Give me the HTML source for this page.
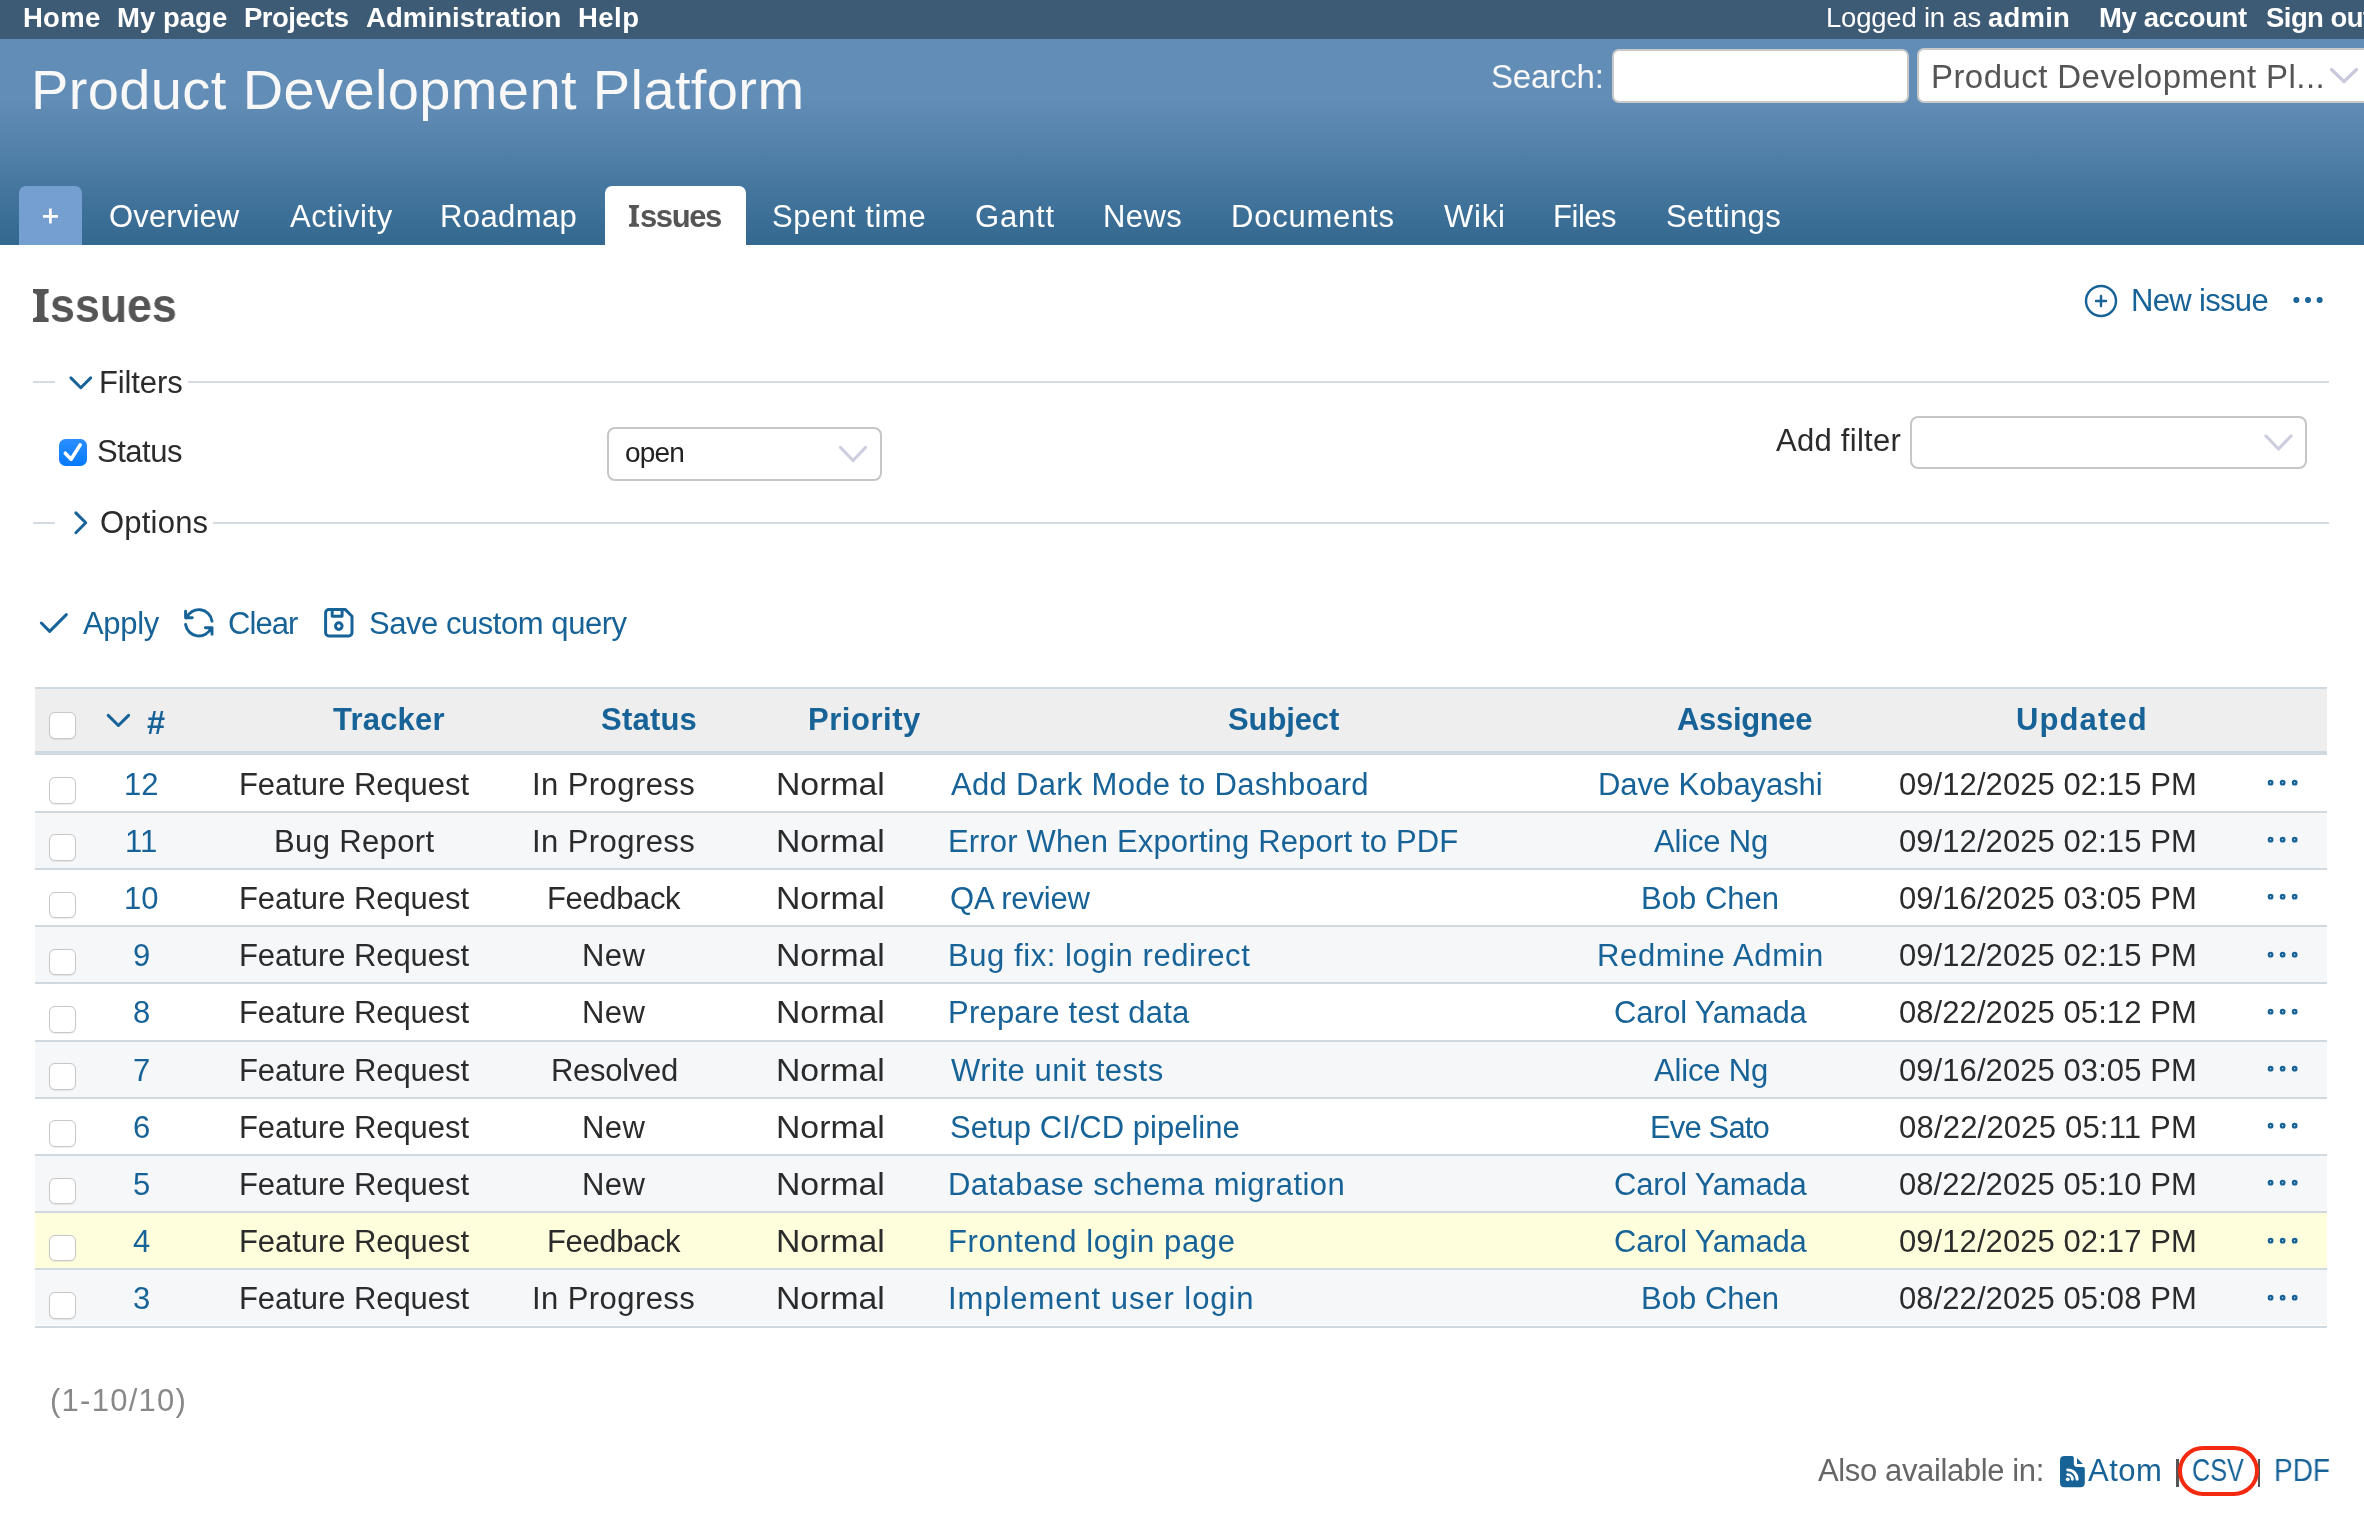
<!DOCTYPE html>
<html><head><meta charset="utf-8"><title>Issues - Product Development Platform</title>
<style>
html,body{margin:0;padding:0;overflow:hidden;}
body{width:2364px;height:1524px;overflow:hidden;position:relative;background:#fff;font-family:"Liberation Sans",sans-serif;}
.t{position:absolute;white-space:nowrap;will-change:transform;}
svg{overflow:visible;}
</style></head><body>
<div style="position:absolute;left:0px;top:0px;width:2364px;height:39px;background:#3e5b76;"></div>
<div class="t" style="left:22.74px;top:4.23px;font-size:27.5px;line-height:27.5px;color:#fff;font-weight:bold;letter-spacing:0.256px;">Home</div>
<div class="t" style="left:116.74px;top:4.23px;font-size:27.5px;line-height:27.5px;color:#fff;font-weight:bold;letter-spacing:0.025px;">My page</div>
<div class="t" style="left:244.14px;top:4.23px;font-size:27.5px;line-height:27.5px;color:#fff;font-weight:bold;letter-spacing:-0.504px;">Projects</div>
<div class="t" style="left:366.31px;top:4.23px;font-size:27.5px;line-height:27.5px;color:#fff;font-weight:bold;letter-spacing:0.102px;">Administration</div>
<div class="t" style="left:578.14px;top:4.23px;font-size:27.5px;line-height:27.5px;color:#fff;font-weight:bold;letter-spacing:0.473px;">Help</div>
<div class="t" style="left:1825.73px;top:4.23px;font-size:27.5px;line-height:27.5px;color:#fff;letter-spacing:-0.207px;">Logged in as</div>
<div class="t" style="left:1987.67px;top:4.23px;font-size:27.5px;line-height:27.5px;color:#fff;font-weight:bold;letter-spacing:0.197px;">admin</div>
<div class="t" style="left:2099.14px;top:4.23px;font-size:27.5px;line-height:27.5px;color:#fff;font-weight:bold;letter-spacing:-0.339px;">My account</div>
<div class="t" style="left:2265.78px;top:4.23px;font-size:27.5px;line-height:27.5px;color:#fff;font-weight:bold;letter-spacing:-0.552px;">Sign out</div>
<div style="position:absolute;left:0px;top:39px;width:2364px;height:206px;background:linear-gradient(180deg,#628db6 0px,#628db6 60px,#33688f 206px);"></div>
<div class="t" style="left:30.58px;top:61.60px;font-size:56px;line-height:56px;color:#f8f8f8;letter-spacing:0.388px;">Product Development Platform</div>
<div class="t" style="left:1491.12px;top:60.25px;font-size:33px;line-height:33px;color:#f8f8f8;letter-spacing:-0.138px;">Search:</div>
<div style="position:absolute;left:1611.6px;top:48.5px;width:297.4000000000001px;height:54.900000000000006px;background:#fff;border:2px solid #c9c9c9;border-radius:7px;box-sizing:border-box;"></div>
<div style="position:absolute;left:1917px;top:48px;width:483px;height:55px;background:#fff;border:2px solid #c9c9c9;border-radius:7px;box-sizing:border-box;"></div>
<div class="t" style="left:1931.28px;top:59.95px;font-size:33px;line-height:33px;color:#555;letter-spacing:0.430px;">Product Development Pl...</div>
<svg style="position:absolute;left:2328px;top:62px;" width="32" height="26" viewBox="0 0 32 26" preserveAspectRatio="none" fill="none"><path d="M3.5 7.5 L16 19.5 L28.5 7.5" stroke="#c9c9dd" stroke-width="3.2" stroke-linecap="round" stroke-linejoin="round"/></svg>
<div style="position:absolute;left:19px;top:186px;width:63px;height:59px;background:#759fcf;border-radius:7px 7px 0 0;"></div>
<svg style="position:absolute;left:40px;top:206px;" width="21" height="21" viewBox="0 0 21 21" preserveAspectRatio="none" fill="none"><path d="M10.4 2.5 V17.6 M3 10.3 H18" stroke="#fff" stroke-width="2.7"/></svg>
<div style="position:absolute;left:605px;top:186px;width:140.70000000000005px;height:59px;background:#fff;border-radius:7px 7px 0 0;"></div>
<div class="t" style="left:109.03px;top:200.95px;font-size:31px;line-height:31px;color:#fff;letter-spacing:0.143px;">Overview</div>
<div class="t" style="left:289.92px;top:200.95px;font-size:31px;line-height:31px;color:#fff;letter-spacing:0.566px;">Activity</div>
<div class="t" style="left:440.44px;top:200.95px;font-size:31px;line-height:31px;color:#fff;letter-spacing:0.402px;">Roadmap</div>
<div class="t" style="left:771.61px;top:200.95px;font-size:31px;line-height:31px;color:#fff;letter-spacing:0.615px;">Spent time</div>
<div class="t" style="left:975.25px;top:200.95px;font-size:31px;line-height:31px;color:#fff;letter-spacing:0.797px;">Gantt</div>
<div class="t" style="left:1103.04px;top:200.95px;font-size:31px;line-height:31px;color:#fff;letter-spacing:0.448px;">News</div>
<div class="t" style="left:1231.14px;top:200.95px;font-size:31px;line-height:31px;color:#fff;letter-spacing:0.770px;">Documents</div>
<div class="t" style="left:1444.25px;top:200.95px;font-size:31px;line-height:31px;color:#fff;letter-spacing:0.745px;">Wiki</div>
<div class="t" style="left:1553.14px;top:200.95px;font-size:31px;line-height:31px;color:#fff;letter-spacing:-0.461px;">Files</div>
<div class="t" style="left:1666.40px;top:200.95px;font-size:31px;line-height:31px;color:#fff;letter-spacing:0.385px;">Settings</div>
<svg style="position:absolute;left:628.8px;top:205.1px;" width="10.05" height="21.7" viewBox="0 0 15.6 33" preserveAspectRatio="none" fill="none"><path d="M0,0 H15.6 V3.9 C13,4.3 11.5,5.2 11.5,6.9 V26.3 C11.5,28 13,28.9 15.6,29.2 V33 H0 V29.2 C2.6,28.9 4,28 4,26.3 V6.9 C4,5.2 2.6,4.3 0,3.9 Z" fill="#555" transform="scale(1 1)"/></svg>
<div class="t" style="left:640.01px;top:200.95px;font-size:31px;line-height:31px;color:#555;font-weight:bold;letter-spacing:-1.415px;">ssues</div>
<svg style="position:absolute;left:33.1px;top:288.6px;" width="15.6" height="33" viewBox="0 0 15.6 33" preserveAspectRatio="none" fill="none"><path d="M0,0 H15.6 V3.9 C13,4.3 11.5,5.2 11.5,6.9 V26.3 C11.5,28 13,28.9 15.6,29.2 V33 H0 V29.2 C2.6,28.9 4,28 4,26.3 V6.9 C4,5.2 2.6,4.3 0,3.9 Z" fill="#555"/></svg>
<div class="t" style="left:50.28px;top:280.77px;font-size:48.5px;line-height:48.5px;color:#555;font-weight:bold;transform:scaleX(0.9222);transform-origin:0 0;">ssues</div>
<svg style="position:absolute;left:2080.7px;top:280.7px;" width="40" height="40" viewBox="0 0 24 24" preserveAspectRatio="none" fill="none"><g stroke="#176398" stroke-width="1.45" stroke-linecap="round" stroke-linejoin="round"><path d="M3 12a9 9 0 1 0 18 0a9 9 0 0 0 -18 0"/><path d="M9 12h6"/><path d="M12 9v6"/></g></svg>
<div class="t" style="left:2130.84px;top:284.75px;font-size:31px;line-height:31px;color:#176398;letter-spacing:-0.664px;">New issue</div>
<svg style="position:absolute;left:2288.2px;top:280.0px;" width="40" height="40" viewBox="0 0 24 24" preserveAspectRatio="none" fill="none"><g stroke="#176398" stroke-width="1.6" stroke-linecap="round" stroke-linejoin="round"><path d="M5 12m-1 0a1 1 0 1 0 2 0a1 1 0 1 0 -2 0"/><path d="M12 12m-1 0a1 1 0 1 0 2 0a1 1 0 1 0 -2 0"/><path d="M19 12m-1 0a1 1 0 1 0 2 0a1 1 0 1 0 -2 0"/></g></svg>
<div style="position:absolute;left:33px;top:381px;width:22px;height:2px;background:#d3dae2;"></div>
<div style="position:absolute;left:188.4px;top:381px;width:2140.6px;height:2px;background:#d3dae2;"></div>
<svg style="position:absolute;left:60.8px;top:362.9px;" width="39.6" height="39.6" viewBox="0 0 24 24" preserveAspectRatio="none" fill="none"><g stroke="#176398" stroke-width="1.8" stroke-linecap="round" stroke-linejoin="round"><path d="M6 9l6 6l6 -6"/></g></svg>
<div class="t" style="left:99.44px;top:366.55px;font-size:31px;line-height:31px;color:#2b2b2b;letter-spacing:-0.126px;">Filters</div>
<div style="position:absolute;left:58.9px;top:439.2px;width:27.699999999999996px;height:26.80000000000001px;background:linear-gradient(#2b8eff,#077aff);border-radius:6.5px;"></div>
<svg style="position:absolute;left:58.9px;top:439.2px;" width="27.7" height="26.8" viewBox="0 0 27.7 26.8" preserveAspectRatio="none" fill="none"><path d="M6.3 14.2 L12.1 20.2 L21.2 5.9" stroke="#fff" stroke-width="3.6" stroke-linecap="round" stroke-linejoin="round"/></svg>
<div class="t" style="left:96.61px;top:435.85px;font-size:31px;line-height:31px;color:#2b2b2b;letter-spacing:-0.481px;">Status</div>
<div style="position:absolute;left:607.4px;top:427.4px;width:275.0px;height:54.10000000000002px;background:#fff;border:2px solid #c6c6c6;border-radius:8px;box-sizing:border-box;"></div>
<div class="t" style="left:624.51px;top:439.30px;font-size:28px;line-height:28px;color:#222;letter-spacing:-0.863px;">open</div>
<svg style="position:absolute;left:836px;top:443px;" width="34" height="22" viewBox="0 0 34 22" preserveAspectRatio="none" fill="none"><path d="M4.5 4.5 L17 17.5 L29.5 4.5" stroke="#cdcde0" stroke-width="3.2" stroke-linecap="round" stroke-linejoin="round"/></svg>
<div class="t" style="left:1776.32px;top:424.75px;font-size:31px;line-height:31px;color:#2b2b2b;letter-spacing:0.272px;">Add filter</div>
<div style="position:absolute;left:1909.5px;top:415.7px;width:397.9000000000001px;height:53.5px;background:#fff;border:2px solid #c6c6c6;border-radius:8px;box-sizing:border-box;"></div>
<svg style="position:absolute;left:2262px;top:432px;" width="34" height="22" viewBox="0 0 34 22" preserveAspectRatio="none" fill="none"><path d="M4 4 L16.5 17 L29 4" stroke="#cdcde0" stroke-width="3.2" stroke-linecap="round" stroke-linejoin="round"/></svg>
<div style="position:absolute;left:33px;top:522px;width:22px;height:2px;background:#d3dae2;"></div>
<div style="position:absolute;left:213.2px;top:522px;width:2115.8px;height:2px;background:#d3dae2;"></div>
<svg style="position:absolute;left:61.3px;top:503.1px;" width="39.6" height="39.6" viewBox="0 0 24 24" preserveAspectRatio="none" fill="none"><g stroke="#176398" stroke-width="1.8" stroke-linecap="round" stroke-linejoin="round"><path d="M9 6l6 6l-6 6"/></g></svg>
<div class="t" style="left:99.93px;top:507.35px;font-size:31px;line-height:31px;color:#2b2b2b;letter-spacing:0.214px;">Options</div>
<svg style="position:absolute;left:32.9px;top:602.8px;" width="40" height="40" viewBox="0 0 24 24" preserveAspectRatio="none" fill="none"><g stroke="#176398" stroke-width="1.8" stroke-linecap="round" stroke-linejoin="round"><path d="M5 12l5 5l10 -10"/></g></svg>
<div class="t" style="left:82.82px;top:608.15px;font-size:31px;line-height:31px;color:#176398;letter-spacing:-0.331px;">Apply</div>
<svg style="position:absolute;left:178.5px;top:603.2px;" width="39.6" height="39.6" viewBox="0 0 24 24" preserveAspectRatio="none" fill="none"><g stroke="#176398" stroke-width="1.8" stroke-linecap="round" stroke-linejoin="round"><path d="M20 11a8.1 8.1 0 0 0 -15.5 -2m-.5 -4v4h4"/><path d="M4 13a8.1 8.1 0 0 0 15.5 2m.5 4v-4h-4"/></g></svg>
<div class="t" style="left:228.45px;top:608.15px;font-size:31px;line-height:31px;color:#176398;letter-spacing:-0.919px;">Clear</div>
<svg style="position:absolute;left:318.5px;top:603.2px;" width="39.6" height="39.6" viewBox="0 0 24 24" preserveAspectRatio="none" fill="none"><g stroke="#176398" stroke-width="1.8" stroke-linecap="round" stroke-linejoin="round"><path d="M6 4h10l4 4v10a2 2 0 0 1 -2 2h-12a2 2 0 0 1 -2 -2v-12a2 2 0 0 1 2 -2"/><path d="M12 14m-2 0a2 2 0 1 0 4 0a2 2 0 1 0 -4 0"/><path d="M14 4l0 4l-6 0l0 -4"/></g></svg>
<div class="t" style="left:368.61px;top:608.15px;font-size:31px;line-height:31px;color:#176398;letter-spacing:-0.455px;">Save custom query</div>
<div style="position:absolute;left:35px;top:687px;width:2292px;height:2px;background:#d0d8e0;"></div>
<div style="position:absolute;left:35px;top:689px;width:2292px;height:62px;background:#eeeeee;"></div>
<div style="position:absolute;left:35px;top:751px;width:2292px;height:4.2000000000000455px;background:#d0d8e0;"></div>
<div style="position:absolute;left:49.2px;top:712.1px;width:27.200000000000003px;height:26.5px;background:#fff;border:1.6px solid #c8c8c8;border-radius:6px;box-sizing:border-box;box-shadow:0 0.5px 1px rgba(0,0,0,0.08);"></div>
<svg style="position:absolute;left:98.2px;top:700.2px;" width="40.8" height="40.8" viewBox="0 0 24 24" preserveAspectRatio="none" fill="none"><g stroke="#176398" stroke-width="1.8" stroke-linecap="round" stroke-linejoin="round"><path d="M6 9l6 6l6 -6"/></g></svg>
<div class="t" style="left:147.43px;top:706.67px;font-size:32.5px;line-height:32.5px;color:#176398;font-weight:bold;">#</div>
<div class="t" style="left:333.19px;top:704.15px;font-size:31px;line-height:31px;color:#176398;font-weight:bold;letter-spacing:0.203px;">Tracker</div>
<div class="t" style="left:601.37px;top:704.15px;font-size:31px;line-height:31px;color:#176398;font-weight:bold;letter-spacing:0.213px;">Status</div>
<div class="t" style="left:808.21px;top:704.15px;font-size:31px;line-height:31px;color:#176398;font-weight:bold;letter-spacing:0.535px;">Priority</div>
<div class="t" style="left:1227.97px;top:704.15px;font-size:31px;line-height:31px;color:#176398;font-weight:bold;letter-spacing:-0.112px;">Subject</div>
<div class="t" style="left:1676.52px;top:704.15px;font-size:31px;line-height:31px;color:#176398;font-weight:bold;letter-spacing:-0.330px;">Assignee</div>
<div class="t" style="left:2016.34px;top:704.15px;font-size:31px;line-height:31px;color:#176398;font-weight:bold;letter-spacing:1.112px;">Updated</div>
<div style="position:absolute;left:35px;top:755.5px;width:2292px;height:55.200000000000045px;background:#ffffff;"></div>
<div style="position:absolute;left:35px;top:810.7px;width:2292px;height:2.0px;background:#d0d8e0;"></div>
<div style="position:absolute;left:49.2px;top:777.2px;width:27.200000000000003px;height:26.5px;background:#fff;border:1.6px solid #c8c8c8;border-radius:6px;box-sizing:border-box;box-shadow:0 0.5px 1px rgba(0,0,0,0.08);"></div>
<div class="t" style="left:124.41px;top:768.65px;font-size:31px;line-height:31px;color:#176398;">12</div>
<div class="t" style="left:239.04px;top:768.65px;font-size:31px;line-height:31px;color:#2b2b2b;letter-spacing:-0.063px;">Feature Request</div>
<div class="t" style="left:532.43px;top:768.65px;font-size:31px;line-height:31px;color:#2b2b2b;letter-spacing:0.427px;">In Progress</div>
<div class="t" style="left:775.62px;top:768.65px;font-size:31px;line-height:31px;color:#2b2b2b;transform:scaleX(1.0887);transform-origin:0 0;">Normal</div>
<div class="t" style="left:950.92px;top:768.65px;font-size:31px;line-height:31px;color:#176398;letter-spacing:0.299px;">Add Dark Mode to Dashboard</div>
<div class="t" style="left:1598.14px;top:768.65px;font-size:31px;line-height:31px;color:#176398;letter-spacing:-0.085px;">Dave Kobayashi</div>
<div class="t" style="left:1898.61px;top:768.65px;font-size:31px;line-height:31px;color:#2b2b2b;letter-spacing:0.070px;">09/12/2025 02:15 PM</div>
<svg style="position:absolute;left:2262px;top:761.9px;" width="41.3" height="41.3" viewBox="0 0 24 24" preserveAspectRatio="none" fill="none"><g stroke="#176398" stroke-width="1.35" stroke-linecap="round" stroke-linejoin="round"><path d="M5 12m-1 0a1 1 0 1 0 2 0a1 1 0 1 0 -2 0"/><path d="M12 12m-1 0a1 1 0 1 0 2 0a1 1 0 1 0 -2 0"/><path d="M19 12m-1 0a1 1 0 1 0 2 0a1 1 0 1 0 -2 0"/></g></svg>
<div style="position:absolute;left:35px;top:812.7px;width:2292px;height:55.200000000000045px;background:#f6f7f9;"></div>
<div style="position:absolute;left:35px;top:867.9000000000001px;width:2292px;height:2.0px;background:#d0d8e0;"></div>
<div style="position:absolute;left:49.2px;top:834.4000000000001px;width:27.200000000000003px;height:26.5px;background:#fff;border:1.6px solid #c8c8c8;border-radius:6px;box-sizing:border-box;box-shadow:0 0.5px 1px rgba(0,0,0,0.08);"></div>
<div class="t" style="left:125.49px;top:825.85px;font-size:31px;line-height:31px;color:#176398;">11</div>
<div class="t" style="left:273.99px;top:825.85px;font-size:31px;line-height:31px;color:#2b2b2b;letter-spacing:0.368px;">Bug Report</div>
<div class="t" style="left:532.43px;top:825.85px;font-size:31px;line-height:31px;color:#2b2b2b;letter-spacing:0.427px;">In Progress</div>
<div class="t" style="left:775.62px;top:825.85px;font-size:31px;line-height:31px;color:#2b2b2b;transform:scaleX(1.0887);transform-origin:0 0;">Normal</div>
<div class="t" style="left:948.44px;top:825.85px;font-size:31px;line-height:31px;color:#176398;letter-spacing:0.165px;">Error When Exporting Report to PDF</div>
<div class="t" style="left:1654.47px;top:825.85px;font-size:31px;line-height:31px;color:#176398;letter-spacing:-0.155px;">Alice Ng</div>
<div class="t" style="left:1898.61px;top:825.85px;font-size:31px;line-height:31px;color:#2b2b2b;letter-spacing:0.070px;">09/12/2025 02:15 PM</div>
<svg style="position:absolute;left:2262px;top:819.1px;" width="41.3" height="41.3" viewBox="0 0 24 24" preserveAspectRatio="none" fill="none"><g stroke="#176398" stroke-width="1.35" stroke-linecap="round" stroke-linejoin="round"><path d="M5 12m-1 0a1 1 0 1 0 2 0a1 1 0 1 0 -2 0"/><path d="M12 12m-1 0a1 1 0 1 0 2 0a1 1 0 1 0 -2 0"/><path d="M19 12m-1 0a1 1 0 1 0 2 0a1 1 0 1 0 -2 0"/></g></svg>
<div style="position:absolute;left:35px;top:869.9px;width:2292px;height:55.200000000000045px;background:#ffffff;"></div>
<div style="position:absolute;left:35px;top:925.1px;width:2292px;height:2.0px;background:#d0d8e0;"></div>
<div style="position:absolute;left:49.2px;top:891.6px;width:27.200000000000003px;height:26.5px;background:#fff;border:1.6px solid #c8c8c8;border-radius:6px;box-sizing:border-box;box-shadow:0 0.5px 1px rgba(0,0,0,0.08);"></div>
<div class="t" style="left:124.21px;top:883.05px;font-size:31px;line-height:31px;color:#176398;">10</div>
<div class="t" style="left:239.04px;top:883.05px;font-size:31px;line-height:31px;color:#2b2b2b;letter-spacing:-0.063px;">Feature Request</div>
<div class="t" style="left:546.64px;top:883.05px;font-size:31px;line-height:31px;color:#2b2b2b;letter-spacing:-0.373px;">Feedback</div>
<div class="t" style="left:775.62px;top:883.05px;font-size:31px;line-height:31px;color:#2b2b2b;transform:scaleX(1.0887);transform-origin:0 0;">Normal</div>
<div class="t" style="left:949.53px;top:883.05px;font-size:31px;line-height:31px;color:#176398;letter-spacing:-0.161px;">QA review</div>
<div class="t" style="left:1641.34px;top:883.05px;font-size:31px;line-height:31px;color:#176398;letter-spacing:0.032px;">Bob Chen</div>
<div class="t" style="left:1898.61px;top:883.05px;font-size:31px;line-height:31px;color:#2b2b2b;letter-spacing:0.070px;">09/16/2025 03:05 PM</div>
<svg style="position:absolute;left:2262px;top:876.3px;" width="41.3" height="41.3" viewBox="0 0 24 24" preserveAspectRatio="none" fill="none"><g stroke="#176398" stroke-width="1.35" stroke-linecap="round" stroke-linejoin="round"><path d="M5 12m-1 0a1 1 0 1 0 2 0a1 1 0 1 0 -2 0"/><path d="M12 12m-1 0a1 1 0 1 0 2 0a1 1 0 1 0 -2 0"/><path d="M19 12m-1 0a1 1 0 1 0 2 0a1 1 0 1 0 -2 0"/></g></svg>
<div style="position:absolute;left:35px;top:927.1px;width:2292px;height:55.200000000000045px;background:#f6f7f9;"></div>
<div style="position:absolute;left:35px;top:982.3000000000001px;width:2292px;height:2.0px;background:#d0d8e0;"></div>
<div style="position:absolute;left:49.2px;top:948.8000000000001px;width:27.200000000000003px;height:26.5px;background:#fff;border:1.6px solid #c8c8c8;border-radius:6px;box-sizing:border-box;box-shadow:0 0.5px 1px rgba(0,0,0,0.08);"></div>
<div class="t" style="left:133.36px;top:940.25px;font-size:31px;line-height:31px;color:#176398;">9</div>
<div class="t" style="left:239.04px;top:940.25px;font-size:31px;line-height:31px;color:#2b2b2b;letter-spacing:-0.063px;">Feature Request</div>
<div class="t" style="left:581.99px;top:940.25px;font-size:31px;line-height:31px;color:#2b2b2b;letter-spacing:0.390px;">New</div>
<div class="t" style="left:775.62px;top:940.25px;font-size:31px;line-height:31px;color:#2b2b2b;transform:scaleX(1.0887);transform-origin:0 0;">Normal</div>
<div class="t" style="left:948.44px;top:940.25px;font-size:31px;line-height:31px;color:#176398;letter-spacing:0.560px;">Bug fix: login redirect</div>
<div class="t" style="left:1597.24px;top:940.25px;font-size:31px;line-height:31px;color:#176398;letter-spacing:0.626px;">Redmine Admin</div>
<div class="t" style="left:1898.61px;top:940.25px;font-size:31px;line-height:31px;color:#2b2b2b;letter-spacing:0.070px;">09/12/2025 02:15 PM</div>
<svg style="position:absolute;left:2262px;top:933.5px;" width="41.3" height="41.3" viewBox="0 0 24 24" preserveAspectRatio="none" fill="none"><g stroke="#176398" stroke-width="1.35" stroke-linecap="round" stroke-linejoin="round"><path d="M5 12m-1 0a1 1 0 1 0 2 0a1 1 0 1 0 -2 0"/><path d="M12 12m-1 0a1 1 0 1 0 2 0a1 1 0 1 0 -2 0"/><path d="M19 12m-1 0a1 1 0 1 0 2 0a1 1 0 1 0 -2 0"/></g></svg>
<div style="position:absolute;left:35px;top:984.3px;width:2292px;height:55.200000000000045px;background:#ffffff;"></div>
<div style="position:absolute;left:35px;top:1039.5px;width:2292px;height:2.0px;background:#d0d8e0;"></div>
<div style="position:absolute;left:49.2px;top:1006.0px;width:27.200000000000003px;height:26.5px;background:#fff;border:1.6px solid #c8c8c8;border-radius:6px;box-sizing:border-box;box-shadow:0 0.5px 1px rgba(0,0,0,0.08);"></div>
<div class="t" style="left:133.40px;top:997.45px;font-size:31px;line-height:31px;color:#176398;">8</div>
<div class="t" style="left:239.04px;top:997.45px;font-size:31px;line-height:31px;color:#2b2b2b;letter-spacing:-0.063px;">Feature Request</div>
<div class="t" style="left:581.99px;top:997.45px;font-size:31px;line-height:31px;color:#2b2b2b;letter-spacing:0.390px;">New</div>
<div class="t" style="left:775.62px;top:997.45px;font-size:31px;line-height:31px;color:#2b2b2b;transform:scaleX(1.0887);transform-origin:0 0;">Normal</div>
<div class="t" style="left:948.44px;top:997.45px;font-size:31px;line-height:31px;color:#176398;letter-spacing:0.213px;">Prepare test data</div>
<div class="t" style="left:1613.55px;top:997.45px;font-size:31px;line-height:31px;color:#176398;letter-spacing:-0.239px;">Carol Yamada</div>
<div class="t" style="left:1898.61px;top:997.45px;font-size:31px;line-height:31px;color:#2b2b2b;letter-spacing:0.070px;">08/22/2025 05:12 PM</div>
<svg style="position:absolute;left:2262px;top:990.6999999999999px;" width="41.3" height="41.3" viewBox="0 0 24 24" preserveAspectRatio="none" fill="none"><g stroke="#176398" stroke-width="1.35" stroke-linecap="round" stroke-linejoin="round"><path d="M5 12m-1 0a1 1 0 1 0 2 0a1 1 0 1 0 -2 0"/><path d="M12 12m-1 0a1 1 0 1 0 2 0a1 1 0 1 0 -2 0"/><path d="M19 12m-1 0a1 1 0 1 0 2 0a1 1 0 1 0 -2 0"/></g></svg>
<div style="position:absolute;left:35px;top:1041.5px;width:2292px;height:55.200000000000045px;background:#f6f7f9;"></div>
<div style="position:absolute;left:35px;top:1096.7px;width:2292px;height:2.0px;background:#d0d8e0;"></div>
<div style="position:absolute;left:49.2px;top:1063.2px;width:27.200000000000003px;height:26.5px;background:#fff;border:1.6px solid #c8c8c8;border-radius:6px;box-sizing:border-box;box-shadow:0 0.5px 1px rgba(0,0,0,0.08);"></div>
<div class="t" style="left:133.40px;top:1054.65px;font-size:31px;line-height:31px;color:#176398;">7</div>
<div class="t" style="left:239.04px;top:1054.65px;font-size:31px;line-height:31px;color:#2b2b2b;letter-spacing:-0.063px;">Feature Request</div>
<div class="t" style="left:550.79px;top:1054.65px;font-size:31px;line-height:31px;color:#2b2b2b;letter-spacing:-0.285px;">Resolved</div>
<div class="t" style="left:775.62px;top:1054.65px;font-size:31px;line-height:31px;color:#2b2b2b;transform:scaleX(1.0887);transform-origin:0 0;">Normal</div>
<div class="t" style="left:950.85px;top:1054.65px;font-size:31px;line-height:31px;color:#176398;letter-spacing:0.520px;">Write unit tests</div>
<div class="t" style="left:1654.47px;top:1054.65px;font-size:31px;line-height:31px;color:#176398;letter-spacing:-0.155px;">Alice Ng</div>
<div class="t" style="left:1898.61px;top:1054.65px;font-size:31px;line-height:31px;color:#2b2b2b;letter-spacing:0.070px;">09/16/2025 03:05 PM</div>
<svg style="position:absolute;left:2262px;top:1047.9px;" width="41.3" height="41.3" viewBox="0 0 24 24" preserveAspectRatio="none" fill="none"><g stroke="#176398" stroke-width="1.35" stroke-linecap="round" stroke-linejoin="round"><path d="M5 12m-1 0a1 1 0 1 0 2 0a1 1 0 1 0 -2 0"/><path d="M12 12m-1 0a1 1 0 1 0 2 0a1 1 0 1 0 -2 0"/><path d="M19 12m-1 0a1 1 0 1 0 2 0a1 1 0 1 0 -2 0"/></g></svg>
<div style="position:absolute;left:35px;top:1098.7px;width:2292px;height:55.200000000000045px;background:#ffffff;"></div>
<div style="position:absolute;left:35px;top:1153.9px;width:2292px;height:2.0px;background:#d0d8e0;"></div>
<div style="position:absolute;left:49.2px;top:1120.4px;width:27.200000000000003px;height:26.5px;background:#fff;border:1.6px solid #c8c8c8;border-radius:6px;box-sizing:border-box;box-shadow:0 0.5px 1px rgba(0,0,0,0.08);"></div>
<div class="t" style="left:133.28px;top:1111.85px;font-size:31px;line-height:31px;color:#176398;">6</div>
<div class="t" style="left:239.04px;top:1111.85px;font-size:31px;line-height:31px;color:#2b2b2b;letter-spacing:-0.063px;">Feature Request</div>
<div class="t" style="left:581.99px;top:1111.85px;font-size:31px;line-height:31px;color:#2b2b2b;letter-spacing:0.390px;">New</div>
<div class="t" style="left:775.62px;top:1111.85px;font-size:31px;line-height:31px;color:#2b2b2b;transform:scaleX(1.0887);transform-origin:0 0;">Normal</div>
<div class="t" style="left:949.61px;top:1111.85px;font-size:31px;line-height:31px;color:#176398;letter-spacing:0.013px;">Setup CI/CD pipeline</div>
<div class="t" style="left:1650.14px;top:1111.85px;font-size:31px;line-height:31px;color:#176398;letter-spacing:-0.855px;">Eve Sato</div>
<div class="t" style="left:1898.61px;top:1111.85px;font-size:31px;line-height:31px;color:#2b2b2b;letter-spacing:0.199px;">08/22/2025 05:11 PM</div>
<svg style="position:absolute;left:2262px;top:1105.1000000000001px;" width="41.3" height="41.3" viewBox="0 0 24 24" preserveAspectRatio="none" fill="none"><g stroke="#176398" stroke-width="1.35" stroke-linecap="round" stroke-linejoin="round"><path d="M5 12m-1 0a1 1 0 1 0 2 0a1 1 0 1 0 -2 0"/><path d="M12 12m-1 0a1 1 0 1 0 2 0a1 1 0 1 0 -2 0"/><path d="M19 12m-1 0a1 1 0 1 0 2 0a1 1 0 1 0 -2 0"/></g></svg>
<div style="position:absolute;left:35px;top:1155.9px;width:2292px;height:55.200000000000045px;background:#f6f7f9;"></div>
<div style="position:absolute;left:35px;top:1211.1000000000001px;width:2292px;height:2.0px;background:#d0d8e0;"></div>
<div style="position:absolute;left:49.2px;top:1177.6000000000001px;width:27.200000000000003px;height:26.5px;background:#fff;border:1.6px solid #c8c8c8;border-radius:6px;box-sizing:border-box;box-shadow:0 0.5px 1px rgba(0,0,0,0.08);"></div>
<div class="t" style="left:133.40px;top:1169.05px;font-size:31px;line-height:31px;color:#176398;">5</div>
<div class="t" style="left:239.04px;top:1169.05px;font-size:31px;line-height:31px;color:#2b2b2b;letter-spacing:-0.063px;">Feature Request</div>
<div class="t" style="left:581.99px;top:1169.05px;font-size:31px;line-height:31px;color:#2b2b2b;letter-spacing:0.390px;">New</div>
<div class="t" style="left:775.62px;top:1169.05px;font-size:31px;line-height:31px;color:#2b2b2b;transform:scaleX(1.0887);transform-origin:0 0;">Normal</div>
<div class="t" style="left:948.44px;top:1169.05px;font-size:31px;line-height:31px;color:#176398;letter-spacing:0.448px;">Database schema migration</div>
<div class="t" style="left:1613.55px;top:1169.05px;font-size:31px;line-height:31px;color:#176398;letter-spacing:-0.239px;">Carol Yamada</div>
<div class="t" style="left:1898.61px;top:1169.05px;font-size:31px;line-height:31px;color:#2b2b2b;letter-spacing:0.070px;">08/22/2025 05:10 PM</div>
<svg style="position:absolute;left:2262px;top:1162.3000000000002px;" width="41.3" height="41.3" viewBox="0 0 24 24" preserveAspectRatio="none" fill="none"><g stroke="#176398" stroke-width="1.35" stroke-linecap="round" stroke-linejoin="round"><path d="M5 12m-1 0a1 1 0 1 0 2 0a1 1 0 1 0 -2 0"/><path d="M12 12m-1 0a1 1 0 1 0 2 0a1 1 0 1 0 -2 0"/><path d="M19 12m-1 0a1 1 0 1 0 2 0a1 1 0 1 0 -2 0"/></g></svg>
<div style="position:absolute;left:35px;top:1213.1px;width:2292px;height:55.200000000000045px;background:#fefedd;"></div>
<div style="position:absolute;left:35px;top:1268.3px;width:2292px;height:2.0px;background:#d0d8e0;"></div>
<div style="position:absolute;left:49.2px;top:1234.8px;width:27.200000000000003px;height:26.5px;background:#fff;border:1.6px solid #c8c8c8;border-radius:6px;box-sizing:border-box;box-shadow:0 0.5px 1px rgba(0,0,0,0.08);"></div>
<div class="t" style="left:133.48px;top:1226.25px;font-size:31px;line-height:31px;color:#176398;">4</div>
<div class="t" style="left:239.04px;top:1226.25px;font-size:31px;line-height:31px;color:#2b2b2b;letter-spacing:-0.063px;">Feature Request</div>
<div class="t" style="left:546.64px;top:1226.25px;font-size:31px;line-height:31px;color:#2b2b2b;letter-spacing:-0.373px;">Feedback</div>
<div class="t" style="left:775.62px;top:1226.25px;font-size:31px;line-height:31px;color:#2b2b2b;transform:scaleX(1.0887);transform-origin:0 0;">Normal</div>
<div class="t" style="left:948.44px;top:1226.25px;font-size:31px;line-height:31px;color:#176398;letter-spacing:0.618px;">Frontend login page</div>
<div class="t" style="left:1613.55px;top:1226.25px;font-size:31px;line-height:31px;color:#176398;letter-spacing:-0.239px;">Carol Yamada</div>
<div class="t" style="left:1898.61px;top:1226.25px;font-size:31px;line-height:31px;color:#2b2b2b;letter-spacing:0.070px;">09/12/2025 02:17 PM</div>
<svg style="position:absolute;left:2262px;top:1219.5px;" width="41.3" height="41.3" viewBox="0 0 24 24" preserveAspectRatio="none" fill="none"><g stroke="#176398" stroke-width="1.35" stroke-linecap="round" stroke-linejoin="round"><path d="M5 12m-1 0a1 1 0 1 0 2 0a1 1 0 1 0 -2 0"/><path d="M12 12m-1 0a1 1 0 1 0 2 0a1 1 0 1 0 -2 0"/><path d="M19 12m-1 0a1 1 0 1 0 2 0a1 1 0 1 0 -2 0"/></g></svg>
<div style="position:absolute;left:35px;top:1270.3000000000002px;width:2292px;height:55.200000000000045px;background:#f6f7f9;"></div>
<div style="position:absolute;left:35px;top:1325.5000000000002px;width:2292px;height:2.0px;background:#d0d8e0;"></div>
<div style="position:absolute;left:49.2px;top:1292.0000000000002px;width:27.200000000000003px;height:26.5px;background:#fff;border:1.6px solid #c8c8c8;border-radius:6px;box-sizing:border-box;box-shadow:0 0.5px 1px rgba(0,0,0,0.08);"></div>
<div class="t" style="left:133.47px;top:1283.45px;font-size:31px;line-height:31px;color:#176398;">3</div>
<div class="t" style="left:239.04px;top:1283.45px;font-size:31px;line-height:31px;color:#2b2b2b;letter-spacing:-0.063px;">Feature Request</div>
<div class="t" style="left:532.43px;top:1283.45px;font-size:31px;line-height:31px;color:#2b2b2b;letter-spacing:0.427px;">In Progress</div>
<div class="t" style="left:775.62px;top:1283.45px;font-size:31px;line-height:31px;color:#2b2b2b;transform:scaleX(1.0887);transform-origin:0 0;">Normal</div>
<div class="t" style="left:948.13px;top:1283.45px;font-size:31px;line-height:31px;color:#176398;letter-spacing:0.939px;">Implement user login</div>
<div class="t" style="left:1641.34px;top:1283.45px;font-size:31px;line-height:31px;color:#176398;letter-spacing:0.032px;">Bob Chen</div>
<div class="t" style="left:1898.61px;top:1283.45px;font-size:31px;line-height:31px;color:#2b2b2b;letter-spacing:0.070px;">08/22/2025 05:08 PM</div>
<svg style="position:absolute;left:2262px;top:1276.7000000000003px;" width="41.3" height="41.3" viewBox="0 0 24 24" preserveAspectRatio="none" fill="none"><g stroke="#176398" stroke-width="1.35" stroke-linecap="round" stroke-linejoin="round"><path d="M5 12m-1 0a1 1 0 1 0 2 0a1 1 0 1 0 -2 0"/><path d="M12 12m-1 0a1 1 0 1 0 2 0a1 1 0 1 0 -2 0"/><path d="M19 12m-1 0a1 1 0 1 0 2 0a1 1 0 1 0 -2 0"/></g></svg>
<div class="t" style="left:49.86px;top:1385.35px;font-size:31px;line-height:31px;color:#888;letter-spacing:1.252px;">(1-10/10)</div>
<div class="t" style="left:1818.42px;top:1454.65px;font-size:31px;line-height:31px;color:#666;letter-spacing:-0.370px;">Also available in:</div>
<svg style="position:absolute;left:2060px;top:1455.8px;" width="25" height="31.2" viewBox="0 0 25 31.2" preserveAspectRatio="none" fill="none"><path d="M0 4.5 Q0 0 4.5 0 L12 0 Q13.8 0 13.8 1.8 L13.8 7.5 Q13.8 11 17.3 11 L23 11 Q24.8 11 24.8 12.8 L24.8 26.7 Q24.8 31.2 20.3 31.2 L4.5 31.2 Q0 31.2 0 26.7 Z" fill="#176398"/><path d="M17 2 L22.9 8 L17 8 Z" fill="#176398"/><circle cx="7.7" cy="23.3" r="1.9" fill="#fff"/><path d="M7.7 18.6 A4.7 4.7 0 0 1 12.4 23.3" stroke="#fff" stroke-width="2.9" stroke-linecap="round"/><path d="M7.7 13.9 A9.4 9.4 0 0 1 17.1 23.3" stroke="#fff" stroke-width="2.9" stroke-linecap="round"/></svg>
<div class="t" style="left:2087.92px;top:1454.65px;font-size:31px;line-height:31px;color:#176398;letter-spacing:0.528px;">Atom</div>
<div style="position:absolute;left:2176px;top:1459px;width:2.599999999999909px;height:28px;background:#555;"></div>
<div class="t" style="left:2192.14px;top:1454.65px;font-size:31px;line-height:31px;color:#176398;transform:scaleX(0.8135);transform-origin:0 0;">CSV</div>
<div style="position:absolute;left:2257.8px;top:1459px;width:2.599999999999909px;height:28px;background:#555;"></div>
<div class="t" style="left:2274.09px;top:1454.65px;font-size:31px;line-height:31px;color:#176398;transform:scaleX(0.9037);transform-origin:0 0;">PDF</div>
<div style="position:absolute;left:2178px;top:1446px;width:81px;height:49.5px;box-sizing:border-box;border:4.6px solid #f42a10;border-radius:25px;"></div>
</body></html>
